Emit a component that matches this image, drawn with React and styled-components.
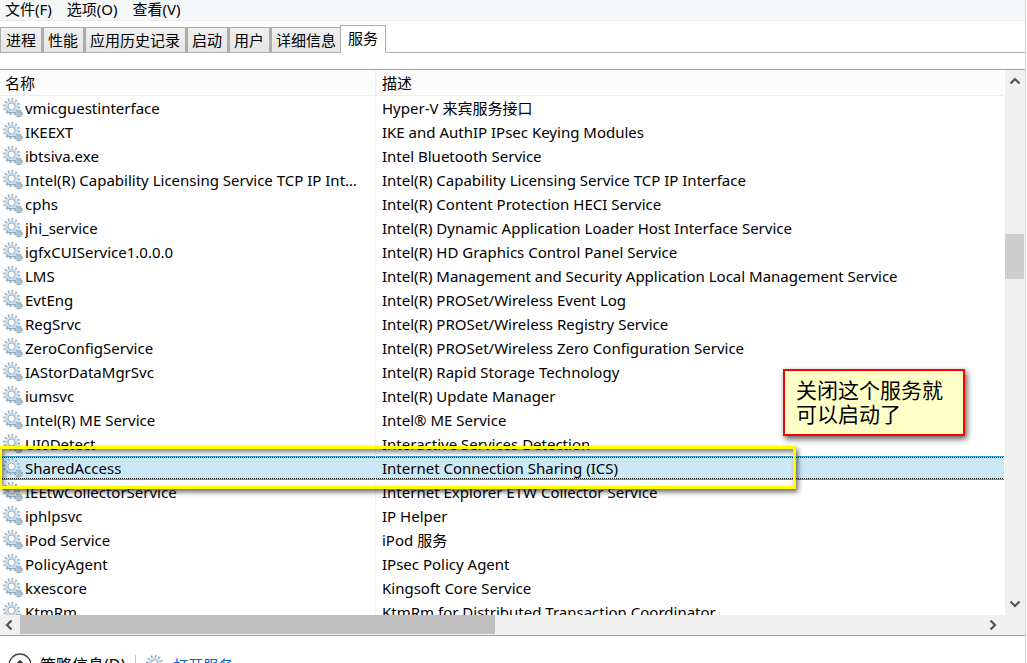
import React from 'react';
import styled, { createGlobalStyle, css } from 'styled-components';

const GlobalStyle = createGlobalStyle`
  * { box-sizing: border-box; }
  body {
    margin: 0;
    background: #fff;
    color: #000;
    font: 15px/20px "Noto Sans", "Noto Sans CJK SC", sans-serif;
  }
  button {
    font: inherit;
    color: inherit;
    border: 0;
    padding: 0;
    background: none;
  }
`;

const Window = styled.div`
  height: 100vh;
  margin-right: 1px;
  display: flex;
  flex-direction: column;
  overflow: hidden;
  border-right: 1px solid #d4d4d4;
`;

const MenuBar = styled.nav`
  flex: none;
  display: flex;
  gap: 15px;
  height: 21px;
  padding-left: 5px;
  background: #f5f6f7;
  border-bottom: 1px solid #e8e9eb;
`;

const MenuItem = styled.button`
  height: 18px;
  line-height: 18px;
  white-space: nowrap;
`;

const TabStrip = styled.div`
  flex: none;
  display: flex;
  align-items: flex-end;
  height: 32px;
  box-shadow: inset 0 -1px #acacac;
`;

const Tab = styled.button`
  height: 26px;
  padding: 0 5px;
  line-height: 24px;
  white-space: nowrap;
  border: 1px solid #acacac;
  background: linear-gradient(#f0f0f0, #e5e5e5);
  & + & {
    padding-left: 4px;
    border-left-width: 2px;
  }
  &[aria-selected='true'] {
    height: 28px;
    margin-left: -2px;
    padding: 0 7px 4px;
    background: #fff;
    border-left-width: 1px;
    border-bottom: 0;
  }
`;

const ListPane = styled.main`
  position: relative;
  flex: 1;
  min-height: 0;
  margin-top: 16px;
  display: flex;
  flex-direction: column;
  border-top: 1px solid #a0a0a0;
  border-bottom: 1px solid #a0a0a0;
`;

const ListArea = styled.div`
  flex: 1;
  min-height: 0;
  display: flex;
`;

const TableViewport = styled.div`
  flex: 1;
  min-width: 0;
  overflow: hidden;
  padding-right: 1px;
`;

const Table = styled.table`
  width: 100%;
  table-layout: fixed;
  border-spacing: 0;
`;

const HeaderCell = styled.th`
  height: 26px;
  padding: 0 6px;
  text-align: left;
  font-weight: 400;
  background: #fcfcfc;
  border-bottom: 1px solid #e5f0fa;
  &:first-child {
    width: 376px;
    padding-left: 5px;
    border-right: 1px solid #e5f0fa;
  }
`;

const Cell = styled.td`
  height: 24px;
  padding: 0 6px;
  overflow: hidden;
  white-space: nowrap;
  text-overflow: ellipsis;
  &:first-child {
    padding: 0 12px 0 2px;
    border-right: 1px solid #eef5fc;
  }
`;

const Row = styled.tr`
  ${({ $selected }) => $selected && css`
    ${Cell} {
      background:
        linear-gradient(#26a0da, #26a0da) top / 100% 1px no-repeat,
        linear-gradient(#26a0da, #26a0da) bottom / 100% 1px no-repeat,
        repeating-linear-gradient(90deg, #111 0 1px, #cbe8f6 1px 2px) 0 1px / 100% 1px no-repeat,
        repeating-linear-gradient(90deg, #111 0 1px, #cbe8f6 1px 2px) 0 22px / 100% 1px no-repeat,
        #cbe8f6;
      border-color: #cbe8f6;
    }
  `}
`;

const NameLine = styled.div`
  display: flex;
  align-items: center;
  gap: 2px;
  span {
    overflow: hidden;
    text-overflow: ellipsis;
  }
`;

const Gear = styled.svg`
  flex: none;
  width: 21px;
  height: 20px;
`;

const ScrollButton = styled.button`
  flex: none;
  width: 20px;
  height: 22px;
  display: grid;
  place-items: center;
`;

const SideButton = styled(ScrollButton)`
  width: 18px;
  height: 20px;
`;

const VerticalBar = styled.div`
  flex: none;
  width: 20px;
  display: flex;
  flex-direction: column;
  justify-content: space-between;
  background: #f0f0f0;
`;

const VerticalTrack = styled.div`
  flex: 1;
  padding-top: 142px;
`;

const VerticalThumb = styled.div`
  height: 45px;
  margin-right: 1px;
  background: #cdcdcd;
`;

const HorizontalBar = styled.div`
  flex: none;
  display: flex;
  height: 20px;
  padding-right: 23px;
  background: #f0f0f0;
`;

const HorizontalTrack = styled.div`
  flex: 1;
  padding-left: 2px;
`;

const HorizontalThumb = styled.div`
  width: 49.3%;
  height: 19px;
  background: #c0c0c0;
`;

const Highlight = styled.div`
  position: absolute;
  top: 376px;
  left: 0;
  width: 796px;
  height: 43px;
  border: 3px solid #ff0;
  border-left-width: 2px;
  box-shadow: 2px 3px 5px rgba(0, 0, 0, 0.6), inset 2px 3px 5px rgba(0, 0, 0, 0.5);
  pointer-events: none;
`;

const Note = styled.aside`
  position: absolute;
  top: 299px;
  left: 783px;
  width: 182px;
  height: 67px;
  padding: 6px 11px;
  border: 2px solid #f00;
  background: #ffffc8;
  box-shadow: 2px 3px 6px rgba(0, 0, 0, 0.65);
  font-family: "Noto Sans CJK SC", sans-serif;
  font-size: 21px;
  line-height: 24px;
  white-space: nowrap;
`;

const Footer = styled.footer`
  flex: none;
  display: flex;
  height: 27px;
  padding: 17px 0 0 8px;
  overflow: hidden;
`;

const DetailsButton = styled.button`
  display: flex;
  gap: 8px;
  height: 24px;
  padding-right: 10px;
  font-size: 16px;
  line-height: 24px;
  white-space: nowrap;
`;

const FooterLink = styled.a`
  display: flex;
  gap: 7px;
  height: 24px;
  margin-top: 2px;
  padding-left: 9px;
  border-left: 1px solid #c8c8c8;
  color: #0066cc;
  text-decoration: none;
`;

const services = [
  ['vmicguestinterface', 'Hyper-V 来宾服务接口'],
  ['IKEEXT', 'IKE and AuthIP IPsec Keying Modules'],
  ['ibtsiva.exe', 'Intel Bluetooth Service'],
  ['Intel(R) Capability Licensing Service TCP IP Interface', 'Intel(R) Capability Licensing Service TCP IP Interface'],
  ['cphs', 'Intel(R) Content Protection HECI Service'],
  ['jhi_service', 'Intel(R) Dynamic Application Loader Host Interface Service'],
  ['igfxCUIService1.0.0.0', 'Intel(R) HD Graphics Control Panel Service'],
  ['LMS', 'Intel(R) Management and Security Application Local Management Service'],
  ['EvtEng', 'Intel(R) PROSet/Wireless Event Log'],
  ['RegSrvc', 'Intel(R) PROSet/Wireless Registry Service'],
  ['ZeroConfigService', 'Intel(R) PROSet/Wireless Zero Configuration Service'],
  ['IAStorDataMgrSvc', 'Intel(R) Rapid Storage Technology'],
  ['iumsvc', 'Intel(R) Update Manager'],
  ['Intel(R) ME Service', 'Intel® ME Service'],
  ['UI0Detect', 'Interactive Services Detection'],
  ['SharedAccess', 'Internet Connection Sharing (ICS)'],
  ['IEEtwCollectorService', 'Internet Explorer ETW Collector Service'],
  ['iphlpsvc', 'IP Helper'],
  ['iPod Service', 'iPod 服务'],
  ['PolicyAgent', 'IPsec Policy Agent'],
  ['kxescore', 'Kingsoft Core Service'],
  ['KtmRm', 'KtmRm for Distributed Transaction Coordinator'],
];

const tabs = ['进程', '性能', '应用历史记录', '启动', '用户', '详细信息', '服务'];

const GearIcon = () => (
  <Gear viewBox="0 0 21 20" aria-hidden="true">
    <circle cx="9.5" cy="8.5" r="7.3" fill="none" stroke="#92a9ba" strokeWidth="2.4" strokeDasharray="1.7 2.12" />
    <circle cx="9.5" cy="8.5" r="5" fill="#fff" stroke="#cbe0ef" strokeWidth="3" />
    <circle cx="9.5" cy="8.5" r="3.5" fill="#fff" stroke="#8fa6b8" strokeWidth="0.9" />
    <path d="M4.5 12.5A6.4 6.4 0 0 0 12.5 14" fill="none" stroke="#7ba9cc" strokeWidth="1.2" />
    <circle cx="16.8" cy="15.5" r="3.3" fill="#e3edf4" stroke="#8098aa" strokeWidth="1.4" strokeDasharray="1.3 0.77" />
    <circle cx="16.8" cy="15.5" r="2.2" fill="#d4e4f0" stroke="#92acbf" strokeWidth="0.8" />
    <circle cx="16.8" cy="15.5" r="1" fill="#fff" stroke="#6f8a9d" strokeWidth="0.7" />
  </Gear>
);

const arrows = {
  up: 'M1.5 8.5L6 4L10.5 8.5',
  down: 'M1.5 3.5L6 8L10.5 3.5',
  left: 'M8.5 1.5L4 6L8.5 10.5',
  right: 'M3.5 1.5L8 6L3.5 10.5',
};

const Arrow = ({ direction }) => (
  <svg width="12" height="12" viewBox="0 0 12 12" aria-hidden="true">
    <path d={arrows[direction]} fill="none" stroke="#555" strokeWidth="2.2" />
  </svg>
);

export default function App() {
  return (
    <Window>
      <GlobalStyle />
      <MenuBar>
        <MenuItem>文件(F)</MenuItem>
        <MenuItem>选项(O)</MenuItem>
        <MenuItem>查看(V)</MenuItem>
      </MenuBar>
      <TabStrip role="tablist">
        {tabs.map((tab) => (
          <Tab key={tab} role="tab" aria-selected={tab === '服务'}>{tab}</Tab>
        ))}
      </TabStrip>
      <ListPane>
        <ListArea>
          <TableViewport>
            <Table>
              <thead>
                <tr>
                  <HeaderCell>名称</HeaderCell>
                  <HeaderCell>描述</HeaderCell>
                </tr>
              </thead>
              <tbody>
                {services.map(([name, description]) => (
                  <Row key={name} $selected={name === 'SharedAccess'}>
                    <Cell>
                      <NameLine><GearIcon /><span>{name}</span></NameLine>
                    </Cell>
                    <Cell>{description}</Cell>
                  </Row>
                ))}
              </tbody>
            </Table>
          </TableViewport>
          <VerticalBar>
            <ScrollButton aria-label="向上滚动"><Arrow direction="up" /></ScrollButton>
            <VerticalTrack><VerticalThumb /></VerticalTrack>
            <ScrollButton aria-label="向下滚动"><Arrow direction="down" /></ScrollButton>
          </VerticalBar>
        </ListArea>
        <HorizontalBar>
          <SideButton aria-label="向左滚动"><Arrow direction="left" /></SideButton>
          <HorizontalTrack><HorizontalThumb /></HorizontalTrack>
          <SideButton aria-label="向右滚动"><Arrow direction="right" /></SideButton>
        </HorizontalBar>
        <Highlight />
        <Note>关闭这个服务就<br />可以启动了</Note>
      </ListPane>
      <Footer>
        <DetailsButton>
          <svg width="24" height="24" viewBox="0 0 24 24" aria-hidden="true">
            <circle cx="12" cy="12" r="11" fill="#fff" stroke="#444" strokeWidth="1.3" />
            <path d="M7.5 13L12 8.5L16.5 13" fill="none" stroke="#333" strokeWidth="2.4" />
          </svg>
          策略信息(D)
        </DetailsButton>
        <FooterLink href="#services"><GearIcon />打开服务</FooterLink>
      </Footer>
    </Window>
  );
}
